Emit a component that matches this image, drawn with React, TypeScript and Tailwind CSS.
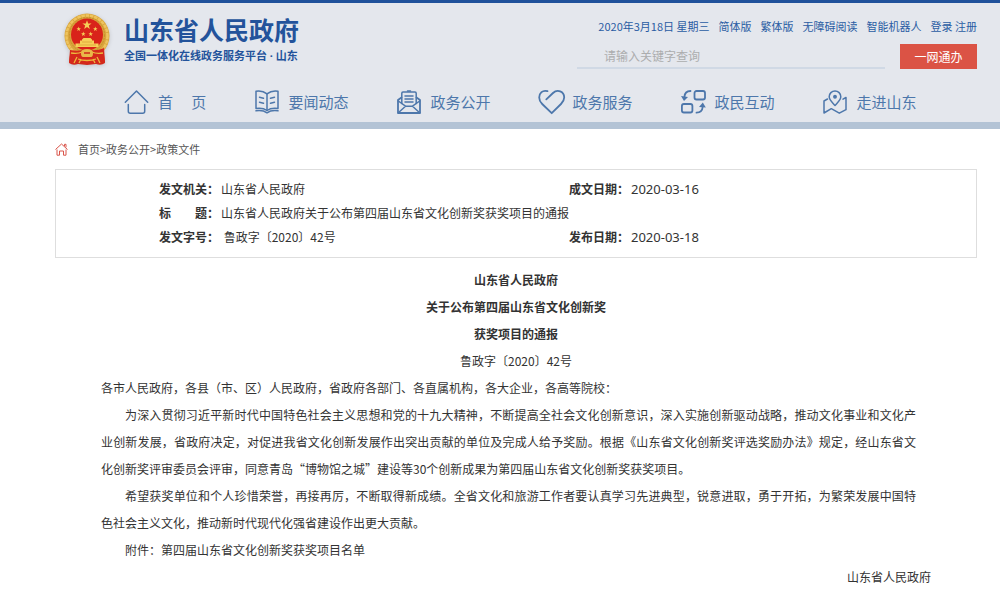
import React from 'react';

const navItems = [
  { label: '首\u2003\u00a0页', icon: <HomeIcon /> },
  { label: '要闻动态', icon: <BookIcon /> },
  { label: '政务公开', icon: <MailIcon /> },
  { label: '政务服务', icon: <HeartIcon /> },
  { label: '政民互动', icon: <ExchangeIcon /> },
  { label: '走进山东', icon: <MapIcon /> },
];

const topLinks = ['简体版', '繁体版', '无障碍阅读', '智能机器人'];

function NavSvg({ children }: { children: React.ReactNode }) {
  return (
    <svg
      viewBox="0 0 24 24"
      className="w-6 h-6 shrink-0 overflow-visible"
      fill="none"
      stroke="currentColor"
      strokeWidth="1.5"
      strokeLinecap="round"
      strokeLinejoin="round"
      aria-hidden="true"
    >
      {children}
    </svg>
  );
}

function HomeIcon() {
  return (
    <NavSvg>
      <path d="M.3 12.3 11.500 1l11.200 11.300" />
      <path d="M3.300 14.400v6.800q0 2 2 2h12.400q2 0 2-2v-6.800" />
    </NavSvg>
  );
}

function BookIcon() {
  return (
    <NavSvg>
      <path d="M12 3.800Q7.500.2 1 1.200v17.300q7-.9 11 2 4-2.900 11-2V1.200q-6.500-1-11 2.600Z" />
      <path d="M12 3.800v16.700" />
      <path d="M1 20.800q7-.9 11 2 4-2.900 11-2" />
      <path d="m4.500 7.300 4 1M4.500 12.300l4 1M19.500 7.300l-4 1M19.500 12.300l-4 1" />
    </NavSvg>
  );
}

function MailIcon() {
  return (
    <NavSvg>
      <path d="M4.500 7.500 1 10v13h22V10l-3.500-2.500" strokeWidth="1.8" />
      <path d="M4.800 13.500V3.200q0-1.200 1.200-1.200h12q1.200 0 1.200 1.200v10.300" />
      <path d="m1.300 11 7.200 5.200h7l7.200-5.200M1.300 22.700l7.200-6.500M22.700 22.700l-7.200-6.500" />
      <path d="M10.500 1h3M8 6h8M8 9h8M8 12h8" />
    </NavSvg>
  );
}

function HeartIcon() {
  return (
    <NavSvg>
      <path
        d="M8.500 1.200C3.500-.3.2 3.200.2 7.500c0 2.800 1.100 4.600 3 6.500l9.500 9.200L22 14c1.900-1.900 3.200-3.700 3.200-6.500C25.200 1.200 18.300-1.200 14 3L7.300 9.300"
        strokeWidth="1.8"
      />
    </NavSvg>
  );
}

function ExchangeIcon() {
  return (
    <NavSvg>
      <rect x="13.500" y="1" width="10.500" height="8.500" rx="2" strokeWidth="1.8" />
      <rect x=".9" y="14" width="10.500" height="8.500" rx="2" strokeWidth="1.8" />
      <path d="M9.500 1C5.500 1 3.600 4 3.400 7" strokeWidth="1.8" />
      <path d="m0 6 3 5 4-4Z" fill="currentColor" stroke="none" />
      <path d="M15.500 22.700c4.500-.2 6-3.200 6.200-6" strokeWidth="1.8" />
      <path d="m18 17 3.800-4.500 3 5Z" fill="currentColor" stroke="none" />
    </NavSvg>
  );
}

function MapIcon() {
  return (
    <NavSvg>
      <path d="M12 15.500C9.500 12.500 6.200 10 6.200 6.700a5.800 5.800 0 0 1 11.600 0c0 3.300-3.300 5.800-5.800 8.800Z" />
      <circle cx="12" cy="6.800" r="1.200" fill="currentColor" />
      <path d="M4.500 9 1 11v12l7.300-4.300 8 4.500 6.700-3.500V7.500l-3 1.700" />
    </NavSvg>
  );
}

function Emblem() {
  const star = 'M0-1 .24-.31.95-.31.38.12.59.81 0 .4-.59.81-.38.12-.95-.31-.24-.31Z';
  return (
    <svg viewBox="0 0 46 54" className="w-[46px] h-[54px] shrink-0 drop-shadow-sm" aria-hidden="true">
      <path d="M7 34 5 50q4 3 9 1l9 1 9-1q5 2 9-1l-2-16Z" fill="#cf2a1b" />
      <ellipse cx="23" cy="23" rx="22.500" ry="22.500" fill="#d9a53c" />
      <ellipse cx="23" cy="23" rx="20.500" ry="20.500" fill="none" stroke="#eec45e" strokeWidth="2.500" strokeDasharray="3.500 .8" />
      <ellipse cx="23" cy="22" rx="17.500" ry="17.500" fill="none" stroke="#c68f2c" strokeWidth="1" strokeDasharray="2 1" />
      <ellipse cx="23" cy="21.500" rx="16" ry="16" fill="#d9231a" />
      <g fill="#f6cf58">
        <path d={star} transform="translate(23 12) scale(4.800)" />
        <path d={star} transform="translate(14.700 16) scale(2.400)" />
        <path d={star} transform="translate(19.300 21) scale(2.400)" />
        <path d={star} transform="translate(26.700 21) scale(2.400)" />
        <path d={star} transform="translate(31.300 16) scale(2.400)" />
        <path d="m18 26.500 1.500-1.500h7l1.500 1.500v1h2v3h4.500v3.500h-23v-3.500H16v-3h2Z" />
      </g>
      <path d="M18 29h10M14 32h18" stroke="#d79f35" strokeWidth=".7" />
      <path d="M6 37q9 2 17-1 8 3 17-1l1 14q-4 3-8 0l-10 2-10-2q-4 3-8 0Z" fill="#d5281b" />
      <path d="M17 40q0-4 6-4t6 4-2 4h-8q-2 0-2-4Z" fill="#e9b949" />
      <path d="M20 40h6" stroke="#cf2a1b" strokeWidth="1.500" />
      <path d="M7 40q7 1 11-1M39 40q-7 1-11-1M10 50l3-6M36 50l-3-6M15 50l2-4M31 50l-2-4M14 46q9 3 18 0" fill="none" stroke="#ecb93d" strokeWidth="1.300" />
    </svg>
  );
}

const Header: React.FC = () => (
  <header className="border-t-[3px] border-t-[#1f519b] border-b-[7px] border-b-[#b3c3d5] bg-[#e4e7ed] text-[#2a5ca3]">
    <div className="flex items-start justify-between pl-16 pr-[23px] h-[79px]">
      <a href="#" className="flex items-start gap-[14px] pt-[10px] text-[#23539b]">
        <Emblem />
        <span className="flex flex-col whitespace-nowrap font-bold">
          <span className="text-[25px] leading-8">山东省人民政府</span>
          <span className="text-[11px] leading-5">
            全国一体化在线政务服务平台<span className="font-['Noto_Sans']"> · </span>山东
          </span>
        </span>
      </a>

      <div className="flex flex-col w-[400px] pt-[15px]">
        <div className="flex items-center justify-end gap-[9px] text-[11px] leading-4 whitespace-nowrap">
          <time dateTime="2020-03-18">2020年3月18日 星期三</time>
          {topLinks.map((link) => (
            <a key={link} href="#">{link}</a>
          ))}
          <span>
            <a href="#">登录</a> <a href="#">注册</a>
          </span>
        </div>
        <form className="flex gap-[15px] mt-[10px] text-xs">
          <input
            type="text"
            aria-label="请输入关键字查询"
            placeholder="请输入关键字查询"
            className="flex-1 min-w-0 h-[25px] pl-[27px] border-b-2 border-[#d0d9e5] bg-transparent outline-none placeholder:text-[#acadae]"
          />
          <button type="button" className="w-[77px] h-[25px] bg-[#db5345] text-white">
            一网通办
          </button>
        </form>
      </div>
    </div>

    <nav className="flex items-center gap-[49px] h-10 pl-[125px] text-[15px] text-[#4d77ab] whitespace-nowrap">
      {navItems.map((item) => (
        <a key={item.label} href="#" className="flex items-center gap-[9px]">
          {item.icon}
          <span>{item.label}</span>
        </a>
      ))}
    </nav>
  </header>
);

const InfoTable: React.FC = () => (
  <div className="border border-[#dedede] pt-[7px] pb-2 pl-[103px]">
    <table className="w-full table-fixed text-left leading-6">
      <colgroup>
        <col className="w-[62px]" />
        <col className="w-[348px]" />
        <col className="w-[62px]" />
        <col />
      </colgroup>
      <tbody>
        <tr>
          <th scope="row">发文机关：</th>
          <td>山东省人民政府</td>
          <th scope="row">成文日期：</th>
          <td className="font-['Noto_Sans'] text-[13px]">2020-03-16</td>
        </tr>
        <tr>
          <th scope="row">标{'\u3000\u3000'}题：</th>
          <td colSpan={3}>山东省人民政府关于公布第四届山东省文化创新奖获奖项目的通报</td>
        </tr>
        <tr>
          <th scope="row">发文字号：</th>
          <td>{'\u00a0'}鲁政字〔2020〕42号</td>
          <th scope="row">发布日期：</th>
          <td className="font-['Noto_Sans'] text-[13px]">2020-03-18</td>
        </tr>
      </tbody>
    </table>
  </div>
);

const Article: React.FC = () => (
  <article className="pt-2 leading-[27px]">
    <h1 className="text-center font-bold">
      山东省人民政府
      <br />
      关于公布第四届山东省文化创新奖
      <br />
      获奖项目的通报
    </h1>
    <p className="text-center">鲁政字〔2020〕42号</p>
    <div className="pl-[46px] pr-[61px] text-justify">
      <p>各市人民政府，各县（市、区）人民政府，省政府各部门、各直属机构，各大企业，各高等院校：</p>
      <p className="indent-6">
        为深入贯彻习近平新时代中国特色社会主义思想和党的十九大精神，不断提高全社会文化创新意识，深入实施创新驱动战略，推动文化事业和文化产业创新发展，省政府决定，对促进我省文化创新发展作出突出贡献的单位及完成人给予奖励。根据《山东省文化创新奖评选奖励办法》规定，经山东省文化创新奖评审委员会评审，同意青岛“博物馆之城”建设等30个创新成果为第四届山东省文化创新奖获奖项目。
      </p>
      <p className="indent-6">
        希望获奖单位和个人珍惜荣誉，再接再厉，不断取得新成绩。全省文化和旅游工作者要认真学习先进典型，锐意进取，勇于开拓，为繁荣发展中国特色社会主义文化，推动新时代现代化强省建设作出更大贡献。
      </p>
      <p className="indent-6">附件：第四届山东省文化创新奖获奖项目名单</p>
    </div>
    <p className="pr-[46px] text-right">山东省人民政府</p>
  </article>
);

const App: React.FC = () => {
  return (
    <div lang="zh-CN" className="min-h-screen bg-white font-['Noto_Sans_CJK_SC',sans-serif] text-xs text-[#333]">
      <Header />
      <main className="pl-[55px] pr-[23px]">
        <div className="flex items-center gap-[10px] h-10 text-[11px] text-[#555]">
          <svg viewBox="0 0 13 13" className="w-[13px] h-[13px]" fill="none" stroke="#d9544a" strokeWidth="1" aria-hidden="true">
            <path d="M.5 6.500 6.500 1l6 5.500M9.500 3V1.300h1.500v3M2 6.500v5.700h2.500V8h4v4.200H11V6.500" />
          </svg>
          <span>
            <a href="#">首页</a>&gt;<a href="#">政务公开</a>&gt;<a href="#">政策文件</a>
          </span>
        </div>
        <InfoTable />
        <Article />
      </main>
    </div>
  );
};

export default App;
